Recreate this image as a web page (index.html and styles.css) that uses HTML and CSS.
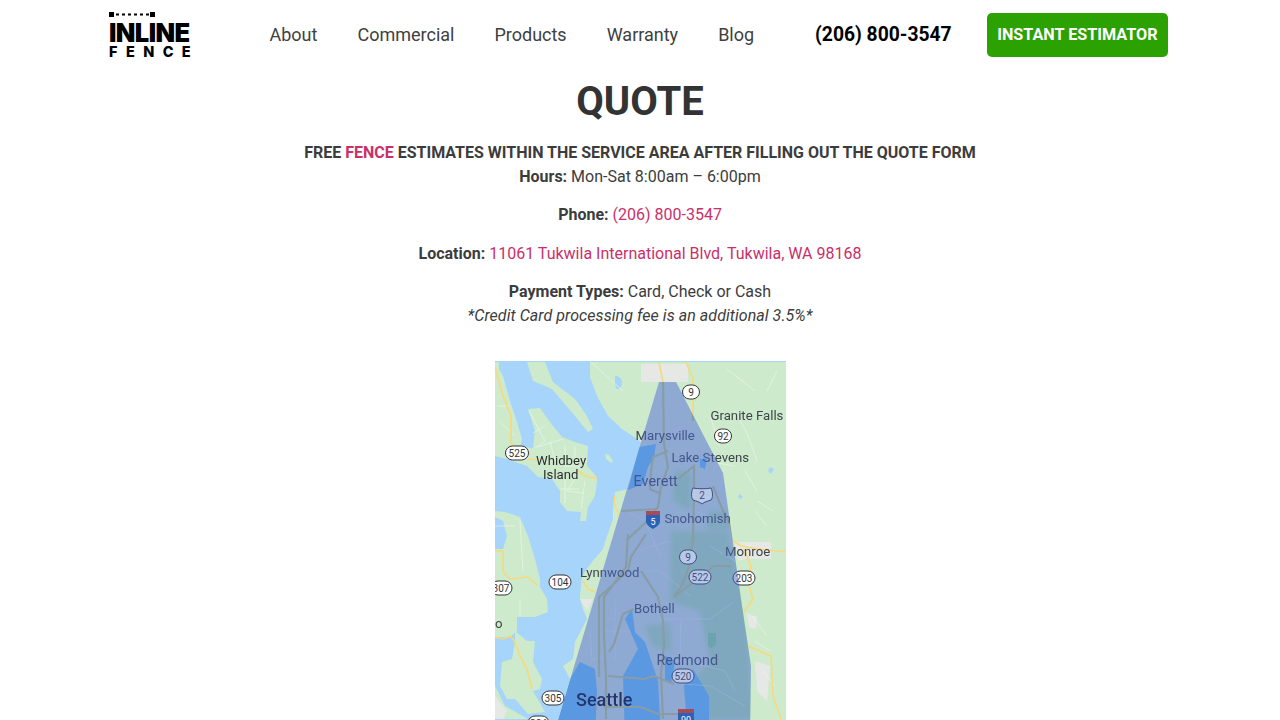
FILE: index.html
```html
<!DOCTYPE html>
<html lang="en">
<head>
  <meta charset="UTF-8">
  <meta name="viewport" content="width=device-width, initial-scale=1.0">
  <title>Quote - Inline Fence</title>
  <link rel="stylesheet" href="styles.css">
</head>
<body>
  <header class="site-header">
    <a class="logo" href="#">
      <svg class="logo-rail" width="46" height="5" viewBox="0 0 46 5">
        <rect x="0" y="0" width="5" height="5"/>
        <rect x="7" y="1.5" width="3" height="2"/>
        <rect x="13" y="1.5" width="3" height="2"/>
        <rect x="19" y="1.5" width="3" height="2"/>
        <rect x="25" y="1.5" width="3" height="2"/>
        <rect x="31" y="1.5" width="3" height="2"/>
        <rect x="37" y="1.5" width="3" height="2"/>
        <rect x="41" y="0" width="5" height="5"/>
      </svg>
      <span class="logo-top">INLINE</span>
      <span class="logo-bottom">FENCE</span>
    </a>
    <nav class="main-nav">
      <a href="#">About</a>
      <a href="#">Commercial</a>
      <a href="#">Products</a>
      <a href="#">Warranty</a>
      <a href="#">Blog</a>
    </nav>
    <a class="header-phone" href="#">(206) 800-3547</a>
    <a class="estimator-btn" href="#">INSTANT ESTIMATOR</a>
  </header>

  <main class="quote">
    <h1>QUOTE</h1>
    <p><strong>FREE <span class="accent">FENCE</span> ESTIMATES WITHIN THE SERVICE AREA AFTER FILLING OUT THE QUOTE FORM</strong><br>
    <strong>Hours:</strong> Mon-Sat 8:00am – 6:00pm</p>
    <p><strong>Phone:</strong> <a href="#">(206) 800-3547</a></p>
    <p><strong>Location:</strong> <a href="#">11061 Tukwila International Blvd, Tukwila, WA 98168</a></p>
    <p><strong>Payment Types:</strong> Card, Check or Cash<br>
    <em>*Credit Card processing fee is an additional 3.5%*</em></p>

    <svg class="service-map" width="291" height="376" viewBox="0 0 291 376">
      <defs>
        <clipPath id="area-clip">
          <polygon points="164,21 181,21 228,112 246,238 256,305 255,376 58,376"/>
        </clipPath>
      </defs>

      <rect class="water" width="291" height="376"/>

      <g class="base">
        <!-- north strip and whidbey -->
        <path class="land" d="M0 1H4V8L8 15 15 40 22 61 27 78 25 86 38 87 40 70 33 48 45 47 55 61 67 76 80 81 93 85 92 105 102 116 102 121 100 135 93 146 91 160 85 160 86 151 72 150 65 141 65 130 57 118 43 116 32 105 20 101 12 98 0 95Z"/>
        <!-- camano -->
        <path class="land" d="M32 1H50L58 21 80 38 92 55 98 68 93 71 80 55 57 28 38 20Z"/>
        <path class="land" d="M110 93L114 94 118 100 116 102 111 98Z"/>
        <!-- mainland -->
        <path class="land" d="M95 1H291V376H58L75 318 68 305 78 298 80 281 92 258 88 248 85 238 85 235 87 215 97 201 108 188 110 181 118 158 118 148 120 131 133 128 150 85 142 78 127 68 113 55 102 35 95 16Z"/>
        <!-- west side -->
        <path class="land" d="M0 150L10 151 25 156 33 175 40 198 45 218 45 226 52 238 53 251 40 256 22 256 22 270 15 276 0 276Z"/>
        <path class="water" d="M0 156L8 160 12 175 8 188 0 188Z"/>
        <path class="land" d="M20 270L32 280 40 280 38 301 47 318 45 328 38 330 50 351 33 353 20 338 12 338 5 325 7 301 17 298 20 281Z"/>
        <path class="land" d="M0 325L10 345 33 358H0Z"/>

        <path class="water" d="M120 15C125 14 129 20 126 26 123 30 120 28 120 22Z"/>
        <path class="water" d="M245 133L248 136 245 138 243 136Z"/>
        <path class="water" d="M275 106L279 108 276 113 273 110Z"/>

        <path class="city" d="M146 3H193V21H146Z"/>
        <path class="city" d="M239 181H276V198H250L244 200Z"/>
        <path class="city" d="M252 252L262 256 261 268 254 266Z"/>
        <path class="city" d="M260 300L275 305 272 340 262 330Z"/>
        <path class="city" d="M85 238H98L92 250Z"/>
        <path class="city" d="M0 335L12 350 8 358H0Z"/>

        <path class="pale-road" d="M34 50L50 80 40 87M50 65L38 72M42 86L68 78M55 80L60 100M70 85L70 105 85 105M80 85L80 100 92 100M2 45H14M4 60L20 75M70 118L70 142M80 118L72 130 88 132M90 120L86 148M65 128H84M25 160L28 210M0 165H20M25 238V255M240 50L252 72 262 100M215 55L225 85M250 110L262 130M272 30L282 10M232 8L260 30M210 100L240 105M96 1L128 30M260 150L272 165M262 140L278 150M257 255L272 275M260 280L275 290M268 310L280 325"/>
        <path class="yellow-road" d="M0 6L8 35 16 55 16 82 21 90M33 98L42 99M83 110L92 116 102 117M120 135L119 143 125 155M0 190H8V211L15 218 33 216 43 225M88 220L93 228 100 231M0 276L8 278 15 275 20 281 25 295 32 308 37 328M164 1L168 21M191 1L198 18 198 53M238 180L246 185 263 188 291 191M249 188L256 205 253 221 258 238 249 251M253 285L276 295 278 335 286 358"/>
      </g>

      <g class="under-area" clip-path="url(#area-clip)">
        <rect class="area-city" y="0" width="291" height="376"/>
        <!-- forest patches east of the cities -->
        <g class="forest-soft">
          <path class="forest" d="M176 170L232 170 250 240 258 358H200L190 330 215 300 205 250 175 240Z"/>
          <path class="forest" d="M180 110L196 112 196 150 178 140Z"/>
          <path class="forest" d="M214 150L232 150 236 168 212 168Z"/>
          <path class="forest" d="M150 265L175 262 176 290 158 285Z"/>
        </g>
        <path class="dark-forest" d="M213 272H221V284L216 287 213 285Z"/>
        <!-- water under the shaded area -->
        <path class="area-water" d="M144 86L161 83 159 96 153 106 148 123 133 129Z"/>
        <path class="area-water" d="M205 98L212 97 210 108 205 106Z"/>
        <path class="area-water" d="M130 258L137 248 140 271 150 281 163 320 166 376H130L128 315 143 288Z"/>
        <path class="area-water" d="M85 301L100 308 102 331 100 376H58L75 318Z"/>
        <path class="area-water" d="M198 308L214 335 214 376H193L189 325Z"/>
        <path class="area-water" d="M170 295L180 300 176 322 170 320Z"/>
        <path class="pale-road" d="M108 258H120M108 270H135M108 295L95 300M120 240V300M95 270L97 300M150 210H165L195 235M140 190L176 180M165 258H215L240 240M186 258L185 300M170 300H190L230 310 240 330M176 322L215 325 250 345M215 185L240 200M130 150L150 160 165 195M200 150L225 160"/>
        <path class="area-road" d="M168 21L169 83 173 106 166 126 163 146 149 163 133 178M173 90L158 96 156 110 155 128 164 132M183 118L199 105 199 136 198 178 194 206 186 226 179 236 196 223 219 205 236 205M126 150L163 148M146 210L163 236 168 260 169 283 166 313 168 358M133 173L131 206 109 236 109 273 111 316 111 358M151 173L136 196 133 210 111 230 104 236 104 316M139 248L128 253 119 283 114 291M113 315L149 318 159 315 179 323M109 346H146L163 353H183M198 37L198 60M218 125L228 150 236 165 238 180"/>
      </g>

      <g class="labels">
        <text class="place" x="215.5" y="59">Granite Falls</text>
        <text class="place" x="140.5" y="79">Marysville</text>
        <text class="place" x="176.5" y="101">Lake Stevens</text>
        <text class="place dark" x="41" y="104">Whidbey</text>
        <text class="place dark" x="48" y="118">Island</text>
        <text class="place big" x="138.5" y="124.5">Everett</text>
        <text class="place" x="169.5" y="162">Snohomish</text>
        <text class="place" x="230" y="195">Monroe</text>
        <text class="place" x="85" y="216">Lynnwood</text>
        <text class="place" x="139" y="252">Bothell</text>
        <text class="place big" x="161.5" y="304">Redmond</text>
        <text class="place seattle" x="81" y="345">Seattle</text>
        <text class="place" x="0" y="267">o</text>
      </g>

      <g class="shield">
        <rect x="187.5" y="24" width="17" height="14" rx="7"/><text x="196" y="35">9</text>
        <rect x="219.5" y="68" width="17" height="14" rx="7"/><text x="228" y="79">92</text>
        <rect x="10.5" y="85" width="23" height="14" rx="7"/><text x="22" y="96">525</text>
        <rect x="238" y="210" width="22" height="14" rx="7"/><text x="249" y="221">203</text>
        <rect x="54" y="214" width="22" height="14" rx="7"/><text x="65" y="225">104</text>
        <rect x="-4" y="220" width="21" height="14" rx="7"/><text x="6" y="231">307</text>
        <rect x="47" y="330" width="22" height="14" rx="7"/><text x="58" y="341">305</text>
        <rect x="33" y="355" width="21" height="14" rx="7"/><text x="43.5" y="366">304</text>
      </g>

      <polygon class="service-area" points="164,21 181,21 228,112 246,238 256,305 255,376 58,376"/>

      <g class="shield tinted">
        <path d="M198 127C203 128 211 128 216 127 218 131 218 137 216 139 213 140 209 141 207 143 205 141 201 140 198 139 196 137 196 131 198 127Z"/><text x="207" y="138">2</text>
        <rect x="184.5" y="189" width="17" height="14" rx="7"/><text x="193" y="200">9</text>
        <rect x="194" y="209" width="22" height="14" rx="7"/><text x="205" y="220">522</text>
        <rect x="177" y="308" width="22" height="14" rx="7"/><text x="188" y="319">520</text>
      </g>

      <g class="interstate">
        <path class="i-blue" d="M151 154H165V160C165 164 161 166 158 168 155 166 151 164 151 160Z"/>
        <rect class="i-red" x="151" y="150" width="14" height="4"/>
        <text x="158" y="164">5</text>
        <path class="i-blue" d="M183 352H199V370H183Z"/>
        <rect class="i-red" x="183" y="348" width="16" height="4"/>
        <text x="191" y="362">90</text>
      </g>
    </svg>
  </main>
</body>
</html>
```

FILE: styles.css
```css
body {
  margin: 0;
  padding: 0;
  background-color: white;
  font-family: Roboto, "Liberation Sans", sans-serif;
  font-size: 16px;
  line-height: 24px;
  color: #3c3c3c;
}

a {
  text-decoration: none;
}

.site-header {
  display: flex;
  align-items: center;
  height: 70px;
  padding: 0 112px 0 109px;
  white-space: nowrap;
}

.logo {
  display: flex;
  flex-direction: column;
  flex: none;
  width: 81px;
  margin-top: 1px;
  color: black;
}

.logo-rail {
  display: block;
  fill: black;
  margin-bottom: 4px;
}

.logo-top {
  font-family: Inter, sans-serif;
  font-weight: 900;
  font-size: 25.5px;
  line-height: 23px;
  letter-spacing: -0.6px;
}

.logo-bottom {
  font-family: Inter, sans-serif;
  font-weight: 800;
  font-size: 14.5px;
  line-height: 15px;
  letter-spacing: 8.4px;
}

.main-nav {
  display: flex;
  flex: none;
  gap: 40px;
  margin-left: 79.5px;
}

.main-nav a {
  color: #404040;
  font-size: 18px;
}

.header-phone {
  flex: none;
  margin-left: 61px;
  color: black;
  font-weight: 700;
  font-size: 19.3px;
}

.estimator-btn {
  flex: none;
  margin-left: 35.5px;
  padding: 10px;
  border-radius: 5px;
  background-color: #2ca102;
  color: white;
  font-weight: 700;
  font-size: 16.2px;
  line-height: 24.5px;
}

.quote {
  text-align: center;
}

.quote h1 {
  margin: 6px 0 13px;
  font-size: 40px;
  line-height: 52px;
  font-weight: 700;
  color: #333333;
}

.quote p {
  margin: 0 0 14.4px;
}

.quote em {
  letter-spacing: 0.06px;
}

.quote a,
.accent {
  color: #c9306a;
}

.service-map {
  display: block;
  margin: 32.5px auto 0;
}

/* map */
.water {
  fill: #a6d4fb;
}

.base {
  filter: blur(0.5px);
}

.land {
  fill: #cdeacd;
}

.city {
  fill: #e6e8e5;
}

.pale-road {
  fill: none;
  stroke: #f2f7f0;
  stroke-width: 0.8;
  opacity: 0.7;
}

.yellow-road {
  fill: none;
  stroke: #f7d97c;
  stroke-width: 1.6;
}

.under-area {
  filter: blur(0.7px);
}

.area-city {
  fill: #d0ecd0;
}

.forest-soft {
  filter: blur(2px);
}

.forest {
  fill: #aee8a3;
  opacity: 0.9;
}

.dark-forest {
  fill: #8fdc8a;
}

.area-water {
  fill: #68c8f1;
}

.area-road {
  fill: none;
  stroke: #c4d079;
  stroke-width: 2.2;
}

.service-area {
  fill: #4c68d4;
  fill-opacity: 0.5;
}

.labels {
  filter: blur(0.25px);
}

.place {
  font-size: 13.2px;
  fill: #3f4449;
}

.place.dark {
  fill: #2c2c2c;
}

.place.big {
  font-size: 14.4px;
}

.place.seattle {
  font-size: 18px;
  font-weight: 500;
  fill: black;
}

.shield rect,
.shield path {
  fill: white;
  stroke: #333333;
  stroke-width: 1;
}

.shield text {
  font-size: 10px;
  text-anchor: middle;
  fill: #333333;
}

.shield.tinted rect,
.shield.tinted path {
  fill: #b9c8e6;
  stroke: #3e4f80;
}

.shield.tinted text {
  fill: #3e4f80;
}

.i-blue {
  fill: #2a62b8;
}

.i-red {
  fill: #a84a58;
}

.interstate text {
  font-size: 9px;
  text-anchor: middle;
  fill: white;
}
```
